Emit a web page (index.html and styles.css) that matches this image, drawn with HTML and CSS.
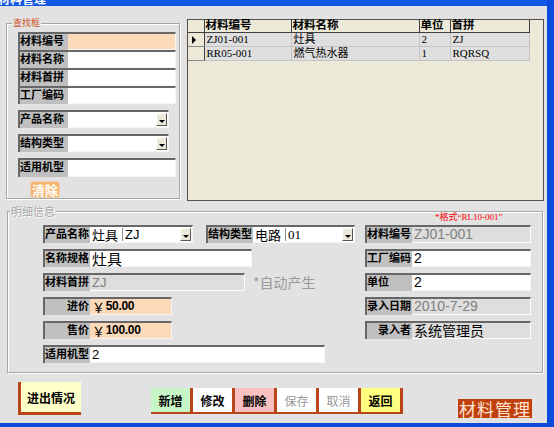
FILE: index.html
```html
<!DOCTYPE html>
<html lang="zh-CN">
<head>
    <meta charset="UTF-8">
    <title>材料管理</title>
    <link rel="stylesheet" href="styles.css">
</head>
<body>
<div class="window">
    <div class="titlebar"><span>材料管理</span></div>
    <div class="client">
        <div class="top">
            <!-- 查找框 -->
            <div class="group search">
                <span class="group-title">查找框</span>
                <div class="srow"><span class="lbl">材料编号</span><span class="inp peach"></span></div>
                <div class="srow"><span class="lbl">材料名称</span><span class="inp"></span></div>
                <div class="srow"><span class="lbl">材料首拼</span><span class="inp"></span></div>
                <div class="srow"><span class="lbl">工厂编码</span><span class="inp"></span></div>
                <div class="srow gap"><span class="lbl">产品名称</span><span class="inp combo"><span class="drop"></span></span></div>
                <div class="srow gap"><span class="lbl">结构类型</span><span class="inp combo"><span class="drop"></span></span></div>
                <div class="srow gap tall"><span class="lbl">适用机型</span><span class="inp"></span></div>
                <button class="clear">清除</button>
            </div>

            <!-- 列表 -->
            <div class="grid">
                <table>
                    <colgroup>
                        <col style="width:16px"><col style="width:87px"><col style="width:128px"><col style="width:31px"><col style="width:79px">
                    </colgroup>
                    <tr class="head">
                        <th></th><th>材料编号</th><th>材料名称</th><th>单位</th><th>首拼</th>
                    </tr>
                    <tr>
                        <td class="sel"><span class="cur"></span></td><td>ZJ01-001</td><td>灶具</td><td>2</td><td>ZJ</td>
                    </tr>
                    <tr>
                        <td class="sel"></td><td>RR05-001</td><td>燃气热水器</td><td>1</td><td>RQRSQ</td>
                    </tr>
                </table>
            </div>
        </div>

        <!-- 明细信息 -->
        <div class="group detail">
            <span class="group-title">明细信息</span>
            <div class="dleft">
                <div class="drow">
                    <span class="lbl">产品名称</span>
                    <span class="inp combo w103">灶具<i class="sep"></i><span class="sans">ZJ</span><span class="drop"></span></span>
                    <span class="lbl after-combo">结构类型</span>
                    <span class="inp combo w102">电路<i class="sep"></i><span class="serif">01</span><span class="drop"></span></span>
                </div>
                <div class="drow">
                    <span class="lbl">名称规格</span>
                    <span class="inp w162 big">灶具</span>
                </div>
                <div class="drow">
                    <span class="lbl">材料首拼</span>
                    <span class="inp off w155 sans">ZJ</span>
                    <span class="hint">*自动产生</span>
                </div>
                <div class="drow">
                    <span class="lbl right">进价</span>
                    <span class="inp peach w82 money"><span class="yen">￥</span>50.00</span>
                </div>
                <div class="drow">
                    <span class="lbl right">售价</span>
                    <span class="inp peach w82 money"><span class="yen">￥</span>100.00</span>
                </div>
                <div class="drow">
                    <span class="lbl">适用机型</span>
                    <span class="inp w235 sans">2</span>
                </div>
            </div>
            <div class="dright">
                <div class="note">*格式“RL10-001”</div>
                <div class="drow"><span class="lbl">材料编号</span><span class="inp off wide sans">ZJ01-001</span></div>
                <div class="drow"><span class="lbl">工厂编码</span><span class="inp wide sans">2</span></div>
                <div class="drow"><span class="lbl">单位</span><span class="inp wide sans">2</span></div>
                <div class="drow"><span class="lbl">录入日期</span><span class="inp off wide sans">2010-7-29</span></div>
                <div class="drow"><span class="lbl right">录入者</span><span class="inp off wide dark">系统管理员</span></div>
            </div>
        </div>

        <div class="bottom">
            <button class="inout">进出情况</button>
            <div class="btns">
                <button class="btn add">新增</button>
                <button class="btn">修改</button>
                <button class="btn del">删除</button>
                <button class="btn dim">保存</button>
                <button class="btn dim">取消</button>
                <button class="btn back">返回</button>
            </div>
            <div class="tag">材料管理</div>
        </div>
    </div>
</div>
</body>
</html>
```

FILE: styles.css
```css
* {
    box-sizing: border-box;
}
body {
    margin: 0;
    font-family: "Noto Sans CJK SC", sans-serif;
}
.window {
    width: 554px;
    height: 427px;
    background-color: #e2e2e2;
    border-right: 7px solid #0d4cdb;
    border-bottom: 4px solid #0d4cdb;
    display: flex;
    flex-direction: column;
    overflow: hidden;
}
.titlebar {
    height: 6px;
    flex-shrink: 0;
    background-color: #1256e4;
    overflow: hidden;
}
.titlebar span {
    display: block;
    margin: -8px 0 0 -2px;
    color: #ffffff;
    font-size: 12px;
    font-weight: bold;
    line-height: 14px;
}
.client {
    flex: 1;
    display: flex;
    flex-direction: column;
}

/* group boxes */
.group {
    position: relative;
    border: 1px solid #a6a6a6;
    box-shadow: inset 1px 1px #ffffff, 1px 1px #ffffff;
}
.group-title {
    position: absolute;
    left: 5px;
    padding: 0 1px;
    background-color: #e2e2e2;
    white-space: nowrap;
}

.top {
    display: flex;
    align-items: flex-start;
    margin-top: 13px;
    padding-left: 6px;
}
.search {
    width: 174px;
    height: 176px;
    margin-top: 4px;
    padding: 8px 0 0 11px;
}
.search .group-title {
    top: -6px;
    font-size: 9px;
    line-height: 10px;
    color: #d2522a;
}
.srow {
    display: flex;
    height: 18px;
}
.srow.gap {
    margin-top: 6px;
}
.srow.tall {
    height: 19px;
}

/* labels and fields */
.lbl {
    flex-shrink: 0;
    background-color: #c0c0c0;
    border-top: 2px solid #676767;
    border-left: 2px solid #676767;
    font-size: 11px;
    font-weight: bold;
    line-height: 13px;
    white-space: nowrap;
    overflow: hidden;
}
.lbl.right {
    text-align: right;
    padding-right: 1px;
}
.search .lbl {
    width: 50px;
}
.search .inp {
    width: 108px;
}
.search .combo {
    width: 101px;
}
.inp {
    display: flex;
    align-items: center;
    flex-shrink: 0;
    background-color: #ffffff;
    border-top: 2px solid #676767;
    border-right: 1px solid #f6f6f6;
    border-bottom: 1px solid #f6f6f6;
    padding-left: 2px;
    font-size: 13px;
    line-height: 15px;
    white-space: nowrap;
}
.inp.peach {
    background-color: #fcd9b8;
}
.inp.off {
    background-color: #dedede;
    color: #808080;
    border-right-color: #ffffff;
    border-bottom-color: #ffffff;
}
.inp.dark {
    color: #000000;
    font-size: 14px;
}
.combo {
    position: relative;
}
.drop {
    margin-left: auto;
    margin-right: 1px;
    width: 11px;
    height: 13px;
    flex-shrink: 0;
    background-color: #ece9d8;
    border: 1px solid;
    border-color: #ffffff #555555 #555555 #ffffff;
    display: flex;
    align-items: flex-end;
    justify-content: center;
    padding-bottom: 2px;
}
.drop::after {
    content: "";
    border-left: 3px solid transparent;
    border-right: 3px solid transparent;
    border-top: 3px solid #000000;
}
.sep {
    display: inline-block;
    width: 1px;
    height: 13px;
    margin: 0 2px 0 4px;
    background-color: #8c8c8c;
}
.sans {
    font-family: "Liberation Sans", "Noto Sans CJK SC", sans-serif;
}
.serif {
    font-family: "Liberation Serif", serif;
}
.clear {
    display: block;
    margin: 5px 0 0 13px;
    width: 28px;
    height: 15px;
    padding: 0;
    border: none;
    border-radius: 2px;
    background-color: #f6b46c;
    box-shadow: 0 0 2px #f6b46c;
    color: #ffffff;
    font-family: inherit;
    font-size: 13px;
    font-weight: bold;
    line-height: 15px;
}

/* data grid */
.grid {
    margin-left: 7px;
    width: 357px;
    height: 182px;
    border: 1px solid #505050;
    background-color: #ece9d8;
}
table {
    border-collapse: collapse;
    table-layout: fixed;
    width: 341px;
}
tr.head {
    height: 12px;
}
tr {
    height: 14px;
}
th {
    background-color: #ece9d8;
    border-right: 1px solid #404040;
    border-bottom: 1px solid #404040;
    padding: 0 0 0 1px;
    font-family: "Liberation Sans", "Noto Sans CJK SC", sans-serif;
    font-size: 11.5px;
    font-weight: bold;
    line-height: 11px;
    text-align: left;
    vertical-align: top;
    white-space: nowrap;
}
td {
    background-color: #dfdfdf;
    border-right: 1px solid #c4c4c4;
    border-bottom: 1px solid #c4c4c4;
    padding: 0 0 0 2px;
    font-family: "Liberation Serif", "Noto Sans CJK SC", serif;
    font-size: 11px;
    line-height: 13px;
    white-space: nowrap;
    overflow: hidden;
}
td.sel {
    background-color: #ece9d8;
    border-right: 1px solid #404040;
    border-bottom: 1px solid #8a8a8a;
}
.cur {
    display: inline-block;
    margin-left: 2px;
    border-top: 4px solid transparent;
    border-bottom: 4px solid transparent;
    border-left: 4px solid #000000;
    vertical-align: middle;
}

/* detail group */
.detail {
    display: flex;
    margin: 10px 0 0 7px;
    width: 536px;
    height: 162px;
    padding: 13px 0 0 35px;
}
.detail .group-title {
    top: -7px;
    left: 2px;
    font-size: 11px;
    line-height: 13px;
    color: #a8a8a8;
    text-shadow: 1px 1px #ffffff;
}
.dleft {
    width: 312px;
    display: flex;
    flex-direction: column;
    gap: 6px;
}
.dright {
    width: 166px;
    margin-left: 10px;
    display: flex;
    flex-direction: column;
    gap: 6px;
}
.drow {
    display: flex;
    height: 18px;
}
.detail .lbl {
    width: 47px;
}
.after-combo {
    margin-left: 13px;
}
.w103 { width: 103px; }
.w102 { width: 102px; }
.w162 { width: 162px; }
.w155 { width: 155px; }
.w82 { width: 82px; }
.w235 { width: 235px; }
.wide { width: 119px; }
.big {
    font-size: 15px;
}
.dright .sans {
    font-size: 14px;
}
.money {
    font-family: "Liberation Sans", sans-serif;
    font-weight: bold;
    font-size: 12px;
    letter-spacing: -0.3px;
}
.yen {
    font-family: "Noto Sans CJK SC", sans-serif;
    font-weight: normal;
    font-size: 13px;
    margin-right: 1px;
}
.hint {
    margin-left: 8px;
    color: #9a9a9a;
    font-size: 14px;
    line-height: 18px;
}
.note {
    height: 12px;
    margin: -14px 0 -4px 70px;
    color: #ff0000;
    font-family: "Liberation Serif", "Noto Sans CJK SC", serif;
    font-size: 9px;
    line-height: 12px;
    white-space: nowrap;
}

/* bottom buttons */
.bottom {
    display: flex;
    align-items: flex-start;
    padding-left: 18px;
}
button {
    padding: 0;
    border: none;
    font-family: inherit;
    cursor: pointer;
}
.inout {
    margin-top: 9px;
    width: 63px;
    height: 33px;
    background-color: #ffffc8;
    border-left: 3px solid #b9461a;
    border-bottom: 3px solid #b9461a;
    font-size: 12px;
    font-weight: bold;
}
.btns {
    display: flex;
    margin: 15px 0 0 70px;
}
.btn {
    width: 42px;
    height: 26px;
    background-color: #ffffff;
    border-right: 3px solid #b9461a;
    border-bottom: 2px solid #b9461a;
    font-size: 12px;
    font-weight: bold;
}
.btn.add {
    background-color: #c6f5c6;
}
.btn.del {
    background-color: #f8c0c0;
}
.btn.dim {
    color: #999999;
    font-weight: normal;
}
.btn.back {
    background-color: #ffff80;
}
.tag {
    margin: 26px 0 0 55px;
    padding: 0 1px;
    background-color: #c0400c;
    color: #ffe4d4;
    font-size: 17px;
    line-height: 19px;
    letter-spacing: 1px;
    white-space: nowrap;
}
```
